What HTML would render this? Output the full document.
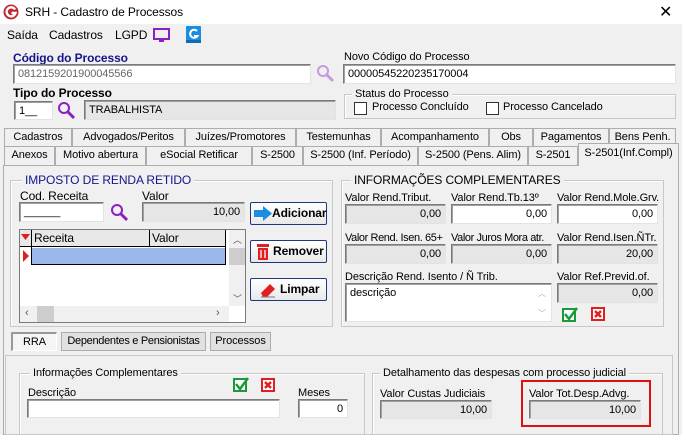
<!DOCTYPE html>
<html><head><meta charset="utf-8"><style>
*{box-sizing:border-box;margin:0;padding:0}
body{width:682px;height:432px;overflow:hidden;background:#f0f0f0;font-family:"Liberation Sans",sans-serif;font-size:11px;letter-spacing:-0.1px;color:#000;position:relative}
.a{position:absolute;white-space:nowrap}
.in{position:absolute;background:#fff;border:1px solid #7a7a7a;border-right-color:#e3e3e3;border-bottom-color:#e3e3e3;box-shadow:inset 1px 1px 0 #a0a0a0;padding:2px 4px;line-height:14px;font-size:11px;white-space:nowrap}
.g{background:#e6e6e6}
.r{text-align:right}
.gb{position:absolute;border:1px solid #c8c8c8;box-shadow:inset 1px 1px 0 #fff}
.gt{position:absolute;background:#f0f0f0;padding:0 3px;line-height:14px;white-space:nowrap}
.tab{position:absolute;height:19px;border:1px solid #adadad;border-bottom:none;background:#f0f0f0;text-align:center;line-height:17px;font-size:11px;white-space:nowrap}
.btn{position:absolute;border:1px solid #1a3a7a;border-radius:2px;background:linear-gradient(#fff,#e8e8e8);font-weight:bold;font-size:12px;line-height:20px}
.cb{position:absolute;width:13px;height:13px;border:1px solid #333;background:#fff}
.sb{position:absolute;border:1px solid #adadad;background:#e1e1e1;text-align:center;line-height:16px;white-space:nowrap}
</style></head><body>
<div class="a" style="left:0;top:0;width:682px;height:24px;background:#fff"></div>
<svg class="a" style="left:3px;top:4px" width="16" height="16" viewBox="0 0 16 16"><circle cx="8" cy="8" r="7.5" fill="#c4262e"/><path d="M12 5.5A4.5 4.5 0 1 0 12.5 9H8.5" stroke="#fff" stroke-width="2.4" fill="none"/></svg>
<div class="a" style="left:25px;top:5px;font-size:12px">SRH - Cadastro de Processos</div>
<div class="a" style="left:659px;top:2px;font-size:16px">✕</div>
<div class="a" style="left:7px;top:28px;font-size:12px">Saída</div>
<div class="a" style="left:49px;top:28px;font-size:12px">Cadastros</div>
<div class="a" style="left:115px;top:28px;font-size:12px">LGPD</div>
<svg class="a" style="left:153px;top:28px" width="17" height="15"><rect x="1" y="1" width="15" height="10" fill="none" stroke="#8b20c0" stroke-width="2"/><rect x="6" y="12" width="5" height="2" fill="#8b20c0"/></svg>
<svg class="a" style="left:186px;top:26px" width="15" height="17"><rect x="0" y="0" width="15" height="17" rx="1" fill="#1a8de0"/><path d="M11 5A4 4 0 1 0 11.5 10H8" stroke="#fff" stroke-width="2" fill="none"/><rect x="0" y="14" width="15" height="3" fill="#0d6cb5"/></svg>
<div class="a" style="left:13px;top:51px;font-weight:bold;color:#14148c;font-size:12px">Código do Processo</div>
<div class="in" style="left:13px;top:64px;width:298px;height:20px;color:#666">0812159201900045566</div>
<svg class="a" style="left:316px;top:64px" width="19" height="19"><circle cx="7" cy="7" r="5" fill="none" stroke="#c49be0" stroke-width="2"/><path d="M11 11L17 17" stroke="#c49be0" stroke-width="3"/></svg>
<div class="a" style="left:13px;top:86px;font-weight:bold;font-size:12px">Tipo do Processo</div>
<div class="in" style="left:14px;top:101px;width:39px;height:19px">1__</div>
<svg class="a" style="left:57px;top:101px" width="19" height="19"><circle cx="7" cy="7" r="5" fill="none" stroke="#8b20c0" stroke-width="2"/><path d="M11 11L17 17" stroke="#8b20c0" stroke-width="3"/></svg>
<div class="in g" style="left:84px;top:100px;width:252px;height:20px">TRABALHISTA</div>
<div class="a" style="left:344px;top:51px">Novo Código do Processo</div>
<div class="in" style="left:343px;top:64px;width:333px;height:20px">00000545220235170004</div>
<div class="gb" style="left:344px;top:94px;width:332px;height:25px"></div>
<div class="gt" style="left:352px;top:87px">Status do Processo</div>
<div class="cb" style="left:354px;top:102px"></div><div class="a" style="left:372px;top:101px">Processo Concluído</div>
<div class="cb" style="left:486px;top:102px"></div><div class="a" style="left:503px;top:101px">Processo Cancelado</div>
<div class="tab" style="left:4px;top:128px;width:68px">Cadastros</div>
<div class="tab" style="left:72px;top:128px;width:113px">Advogados/Peritos</div>
<div class="tab" style="left:185px;top:128px;width:111px">Juízes/Promotores</div>
<div class="tab" style="left:296px;top:128px;width:85px">Testemunhas</div>
<div class="tab" style="left:381px;top:128px;width:108px">Acompanhamento</div>
<div class="tab" style="left:489px;top:128px;width:44px">Obs</div>
<div class="tab" style="left:533px;top:128px;width:76px">Pagamentos</div>
<div class="tab" style="left:609px;top:128px;width:67px">Bens Penh.</div>
<div class="tab" style="left:4px;top:146px;width:51px">Anexos</div>
<div class="tab" style="left:55px;top:146px;width:91px">Motivo abertura</div>
<div class="tab" style="left:146px;top:146px;width:106px">eSocial Retificar</div>
<div class="tab" style="left:252px;top:146px;width:51px">S-2500</div>
<div class="tab" style="left:303px;top:146px;width:115px">S-2500 (Inf. Período)</div>
<div class="tab" style="left:418px;top:146px;width:110px">S-2500 (Pens. Alim)</div>
<div class="tab" style="left:528px;top:146px;width:50px">S-2501</div>
<div class="a" style="left:3px;top:165px;width:676px;height:270px;border:1px solid #adadad;background:#f0f0f0"></div>
<div class="tab" style="left:578px;top:143px;width:101px;height:23px;line-height:18px;z-index:2">S-2501(Inf.Compl)</div>
<div class="gb" style="left:10px;top:180px;width:323px;height:147px"></div>
<div class="gt" style="left:22px;top:173px;color:#14148c;font-size:12px">IMPOSTO DE RENDA RETIDO</div>
<div class="a" style="left:20px;top:189px;font-size:12px">Cod. Receita</div>
<div class="in" style="left:19px;top:202px;width:85px;height:20px">______</div>
<svg class="a" style="left:110px;top:203px" width="19" height="19"><circle cx="7" cy="7" r="5" fill="none" stroke="#8b20c0" stroke-width="2"/><path d="M11 11L17 17" stroke="#8b20c0" stroke-width="3"/></svg>
<div class="a" style="left:142px;top:189px;font-size:12px">Valor</div>
<div class="in g r" style="left:142px;top:202px;width:103px;height:20px">10,00</div>
<div class="btn" style="left:250px;top:202px;width:77px;height:23px"><svg class="a" style="left:3px;top:3px" width="19" height="15"><path d="M0 4H9V0L18 7.5L9 15V11H0Z" fill="#1a8de0"/></svg><span class="a" style="left:21px;top:0">Adicionar</span></div>
<div class="btn" style="left:250px;top:240px;width:77px;height:23px"><svg class="a" style="left:6px;top:2px" width="12" height="17"><rect x="0" y="1" width="12" height="3" fill="#e02020"/><rect x="1" y="5" width="10" height="12" fill="#e02020"/><path d="M4 7V15M8 7V15" stroke="#fff" stroke-width="1.3"/></svg><span class="a" style="left:22px;top:0">Remover</span></div>
<div class="btn" style="left:250px;top:278px;width:77px;height:23px"><svg class="a" style="left:8px;top:2px" width="18" height="18"><path d="M2 12L11 3L16 8L8 16H4Z" fill="#e02020"/><path d="M2 16H16" stroke="#777"/></svg><span class="a" style="left:29px;top:0">Limpar</span></div>
<div class="a" style="left:19px;top:229px;width:227px;height:94px;border:1px solid #7a7a7a;background:#fff"></div>
<div class="a" style="left:20px;top:230px;width:205px;height:17px;background:#e8e8e8;border-bottom:1px solid #000"></div>
<div class="a" style="left:20px;top:230px;width:12px;height:35px;border-right:1px solid #000"></div>
<svg class="a" style="left:21px;top:234px" width="10" height="8"><path d="M0 0H9L4.5 6Z" fill="#e02020"/></svg>
<div class="a" style="left:34px;top:231px;font-size:12px">Receita</div>
<div class="a" style="left:149px;top:230px;height:17px;border-left:1px solid #000"></div>
<div class="a" style="left:152px;top:231px;font-size:12px">Valor</div>
<div class="a" style="left:32px;top:248px;width:193px;height:17px;background:#9bb8e8;border-bottom:1px solid #000"></div>
<div class="a" style="left:225px;top:230px;height:35px;border-left:1px solid #000"></div>
<svg class="a" style="left:23px;top:250px" width="7" height="12"><path d="M0 0L6 6L0 12Z" fill="#e02020"/></svg>
<div class="a" style="left:229px;top:230px;width:16px;height:76px;background:#f0f0f0"></div>
<div class="a" style="left:229px;top:248px;width:16px;height:17px;background:#cdcdcd"></div>
<div class="a" style="left:233px;top:233px;font-size:9px;color:#555">︿</div>
<div class="a" style="left:233px;top:292px;font-size:9px;color:#555">﹀</div>
<div class="a" style="left:20px;top:306px;width:209px;height:16px;background:#f0f0f0"></div>
<div class="a" style="left:37px;top:306px;width:17px;height:16px;background:#cdcdcd"></div>
<div class="a" style="left:25px;top:307px;color:#555">‹</div><div class="a" style="left:216px;top:307px;color:#555">›</div>
<div class="gb" style="left:341px;top:180px;width:323px;height:147px"></div>
<div class="gt" style="left:351px;top:173px;font-size:12px">INFORMAÇÕES COMPLEMENTARES</div>
<div class="a" style="left:345px;top:192px">Valor Rend.Tribut.</div>
<div class="a" style="left:451px;top:192px">Valor Rend.Tb.13º</div>
<div class="a" style="left:557px;top:192px">Valor Rend.Mole.Grv.</div>
<div class="in g r" style="left:345px;top:204px;width:101px;height:20px">0,00</div>
<div class="in r" style="left:451px;top:204px;width:101px;height:20px">0,00</div>
<div class="in r" style="left:557px;top:204px;width:101px;height:20px">0,00</div>
<div class="a" style="left:345px;top:232px;letter-spacing:-0.4px">Valor Rend. Isen. 65+</div>
<div class="a" style="left:451px;top:232px;letter-spacing:-0.4px">Valor Juros Mora atr.</div>
<div class="a" style="left:557px;top:232px">Valor Rend.Isen.ÑTr.</div>
<div class="in g r" style="left:345px;top:244px;width:101px;height:20px">0,00</div>
<div class="in g r" style="left:451px;top:244px;width:101px;height:20px">0,00</div>
<div class="in g r" style="left:557px;top:244px;width:101px;height:20px">20,00</div>
<div class="a" style="left:345px;top:271px">Descrição Rend. Isento / Ñ Trib.</div>
<div class="in" style="left:345px;top:283px;width:207px;height:39px">descrição</div>
<div class="a" style="left:538px;top:288px;font-size:8px;color:#aaa">︿</div>
<div class="a" style="left:538px;top:308px;font-size:8px;color:#aaa">﹀</div>
<div class="a" style="left:557px;top:271px">Valor Ref.Previd.of.</div>
<div class="in g r" style="left:557px;top:283px;width:101px;height:20px">0,00</div>
<svg class="a" style="left:562px;top:307px" width="16" height="15"><rect x="1" y="2" width="12" height="12" fill="#fff" stroke="#1a9a3a" stroke-width="2"/><path d="M3 7L7 12L15 1" stroke="#1a9a3a" stroke-width="2.5" fill="none"/></svg>
<svg class="a" style="left:591px;top:307px" width="14" height="14"><rect x="1" y="1" width="12" height="12" fill="#fff" stroke="#e02020" stroke-width="2"/><path d="M4 4L10 10M10 4L4 10" stroke="#e02020" stroke-width="2.5"/></svg>
<div class="sb" style="left:11px;top:332px;width:46px;height:19px;background:#f5f5f5;border-color:#999 #fff #fff #999;border-width:2px 1px 1px 2px">RRA</div>
<div class="sb" style="left:61px;top:332px;width:145px;height:19px;letter-spacing:-0.3px">Dependentes e Pensionistas</div>
<div class="sb" style="left:210px;top:332px;width:61px;height:19px">Processos</div>
<div class="a" style="left:5px;top:355px;width:668px;height:80px;border:1px solid #c8c8c8"></div>
<div class="gb" style="left:19px;top:373px;width:346px;height:62px"></div>
<div class="gt" style="left:30px;top:366px">Informações Complementares</div>
<div class="a" style="left:28px;top:387px">Descrição</div>
<svg class="a" style="left:233px;top:377px" width="16" height="15"><rect x="1" y="2" width="12" height="12" fill="#fff" stroke="#1a9a3a" stroke-width="2"/><path d="M3 7L7 12L15 1" stroke="#1a9a3a" stroke-width="2.5" fill="none"/></svg>
<svg class="a" style="left:261px;top:378px" width="14" height="14"><rect x="1" y="1" width="12" height="12" fill="#fff" stroke="#e02020" stroke-width="2"/><path d="M4 4L10 10M10 4L4 10" stroke="#e02020" stroke-width="2.5"/></svg>
<div class="a" style="left:298px;top:387px">Meses</div>
<div class="in" style="left:27px;top:399px;width:253px;height:19px"></div>
<div class="in r" style="left:298px;top:399px;width:50px;height:19px">0</div>
<div class="gb" style="left:372px;top:373px;width:291px;height:62px"></div>
<div class="gt" style="left:380px;top:366px">Detalhamento das despesas com processo judicial</div>
<div class="a" style="left:380px;top:388px">Valor Custas Judiciais</div>
<div class="in g r" style="left:380px;top:400px;width:112px;height:19px">10,00</div>
<div class="a" style="left:521px;top:380px;width:130px;height:47px;border:2px solid #e01010"></div>
<div class="a" style="left:529px;top:388px">Valor Tot.Desp.Advg.</div>
<div class="in g r" style="left:529px;top:400px;width:112px;height:19px">10,00</div>
</body></html>
